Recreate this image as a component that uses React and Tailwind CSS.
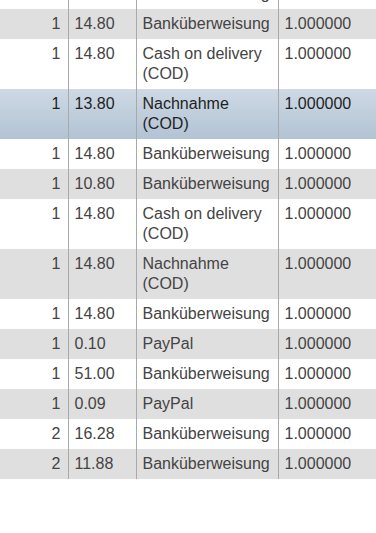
const rows = [
  { qty: 1, price: '14.80', method: 'Banküberweisung', rate: '1.000000' },
  { qty: 1, price: '14.80', method: 'Banküberweisung', rate: '1.000000' },
  { qty: 1, price: '14.80', method: ['Cash on delivery', '(COD)'], rate: '1.000000' },
  { qty: 1, price: '13.80', method: ['Nachnahme', '(COD)'], rate: '1.000000', selected: true },
  { qty: 1, price: '14.80', method: 'Banküberweisung', rate: '1.000000' },
  { qty: 1, price: '10.80', method: 'Banküberweisung', rate: '1.000000' },
  { qty: 1, price: '14.80', method: ['Cash on delivery', '(COD)'], rate: '1.000000' },
  { qty: 1, price: '14.80', method: ['Nachnahme', '(COD)'], rate: '1.000000' },
  { qty: 1, price: '14.80', method: 'Banküberweisung', rate: '1.000000' },
  { qty: 1, price: '0.10', method: 'PayPal', rate: '1.000000' },
  { qty: 1, price: '51.00', method: 'Banküberweisung', rate: '1.000000' },
  { qty: 1, price: '0.09', method: 'PayPal', rate: '1.000000' },
  { qty: 2, price: '16.28', method: 'Banküberweisung', rate: '1.000000' },
  { qty: 2, price: '11.88', method: 'Banküberweisung', rate: '1.000000' },
]

export default function App() {
  return (
    <div className="w-[376px] h-[533px] overflow-hidden bg-white font-['Liberation_Sans',Arial,sans-serif] text-[16px] leading-[20px]">
      <table className="-mt-[21px] w-[430px] border-collapse table-fixed">
        <colgroup>
          <col className="w-[68px]" />
          <col className="w-[68px]" />
          <col className="w-[142px]" />
          <col className="w-[152px]" />
        </colgroup>
        <tbody>
          {rows.map((row, i) => {
            const bg = row.selected
              ? 'bg-gradient-to-b from-[#ced9e4] to-[#b2c3d4] text-[#1f1f1f]'
              : i % 2 === 1
                ? 'bg-[#dfdfdf] text-[#444444]'
                : 'bg-white text-[#444444]'
            return (
              <tr key={i} className={bg}>
                <td className="align-top text-right pr-[7px] py-[5px] border-r border-[#a9a9a9]">{row.qty}</td>
                <td className="align-top pl-[6px] py-[5px] border-r border-[#a9a9a9]">{row.price}</td>
                <td className="align-top pl-[6px] py-[5px] border-r border-[#a9a9a9]">
                  {Array.isArray(row.method)
                    ? row.method.map(line => <div key={line}>{line}</div>)
                    : row.method}
                </td>
                <td className="align-top pl-[6px] py-[5px]">{row.rate}</td>
              </tr>
            )
          })}
        </tbody>
      </table>
    </div>
  )
}
